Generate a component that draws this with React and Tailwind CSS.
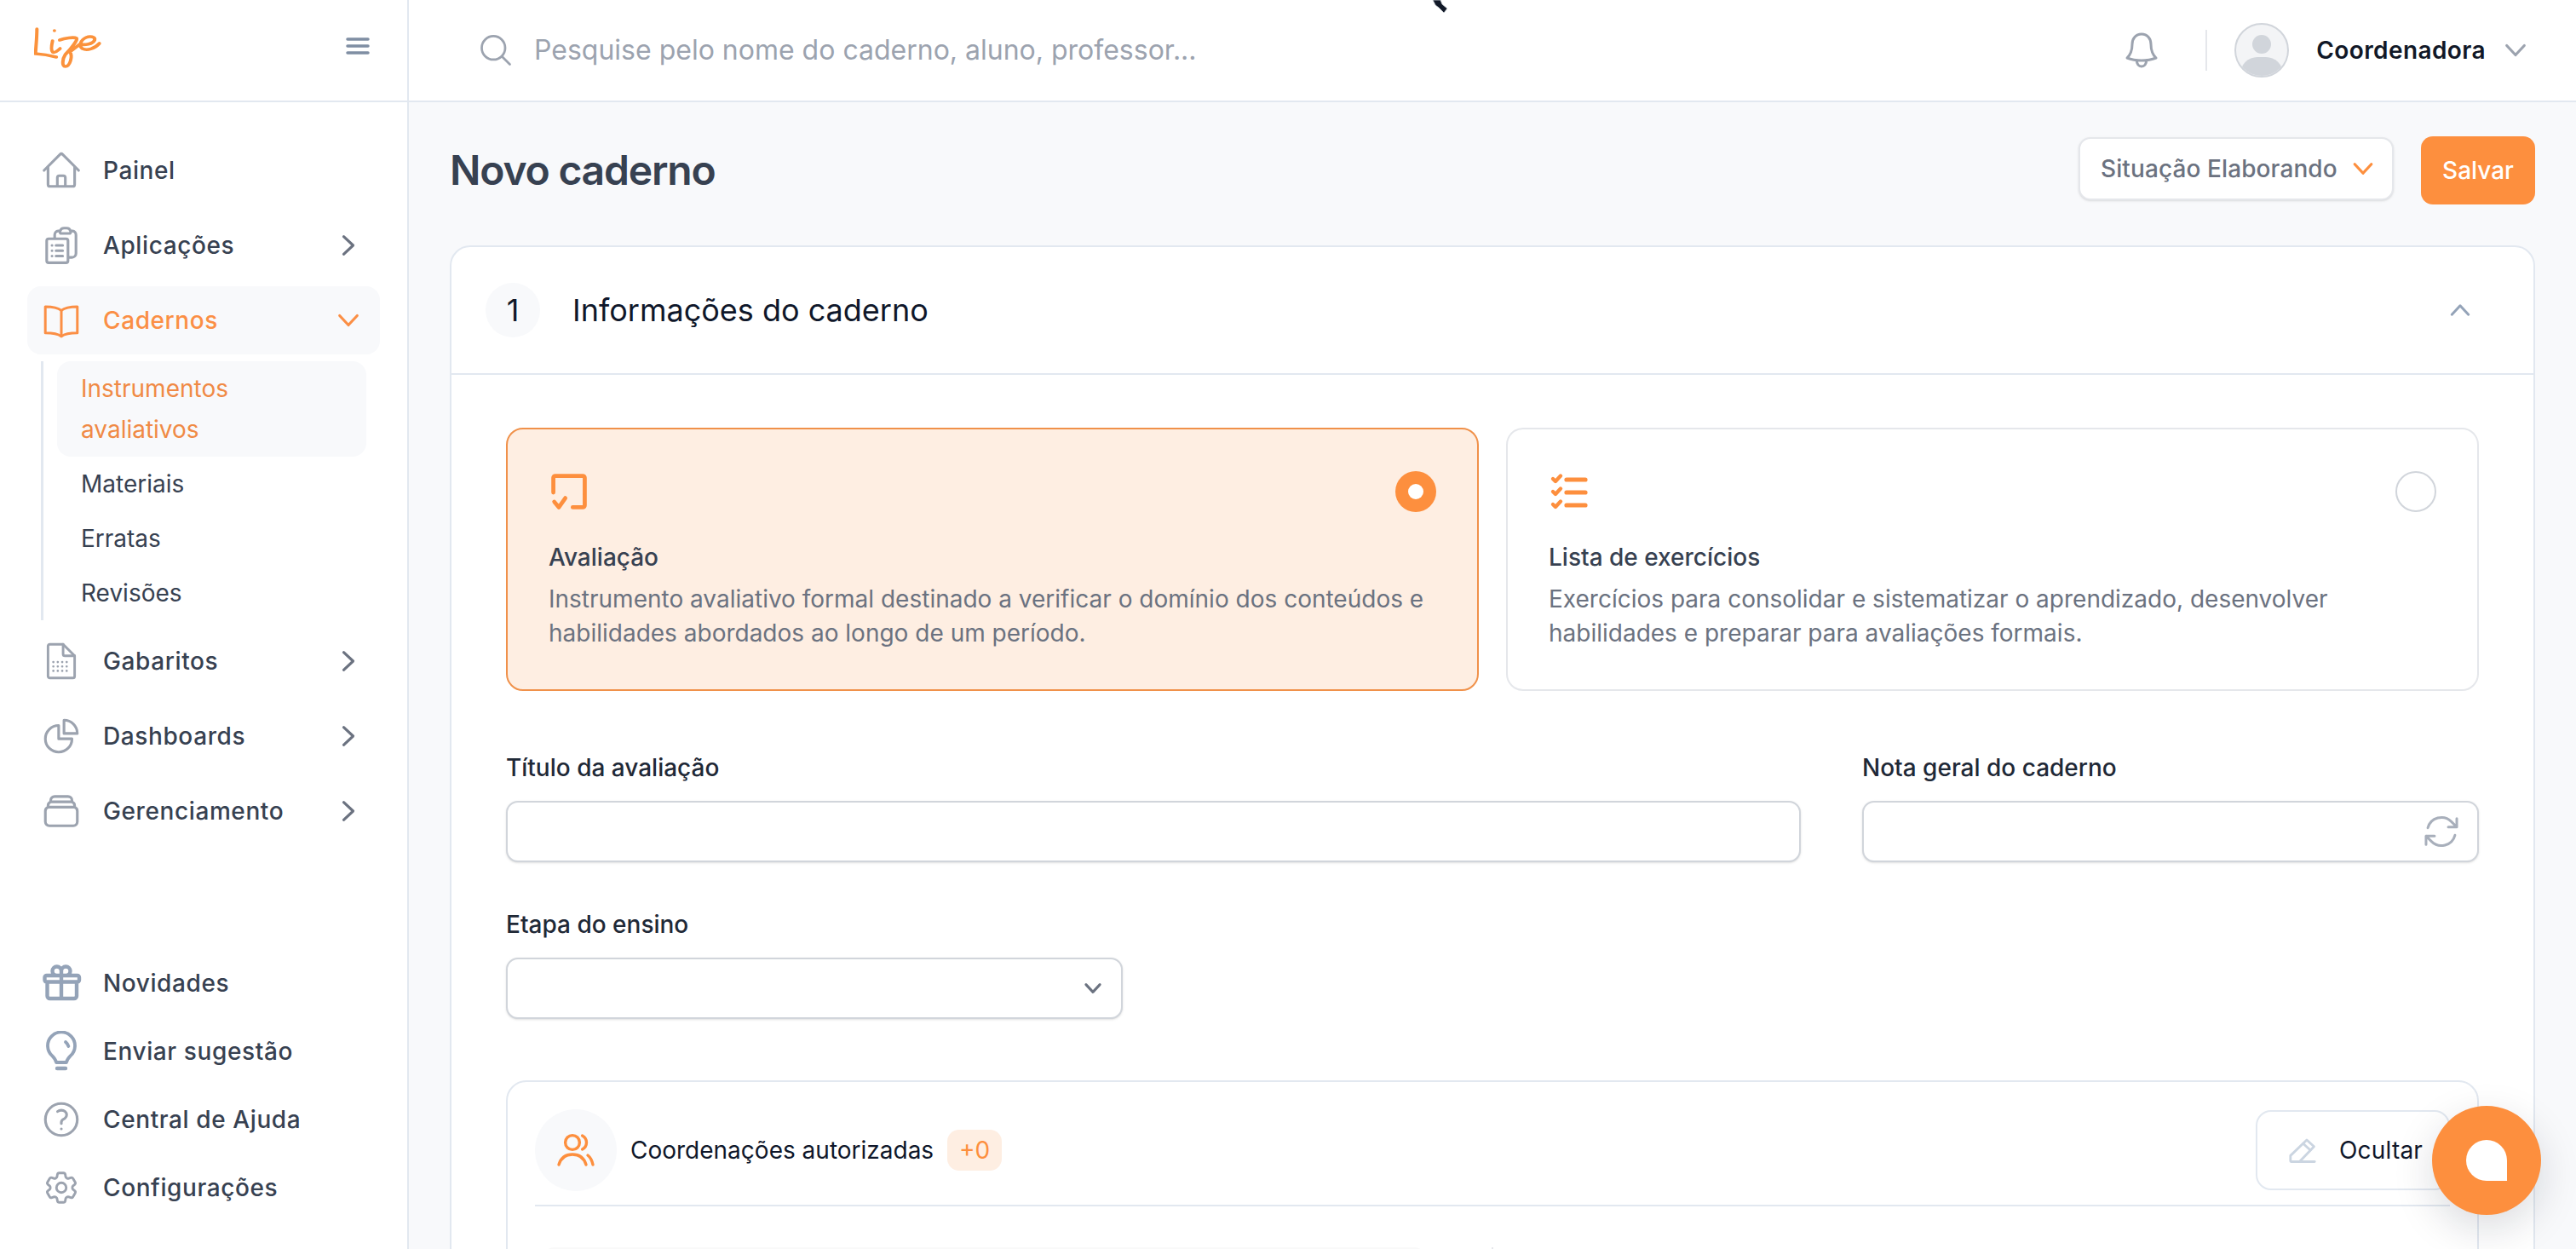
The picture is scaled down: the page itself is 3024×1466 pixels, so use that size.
import {
  HiOutlineHome,
  HiOutlineClipboardDocumentList,
  HiOutlineChartPie,
  HiOutlineRectangleStack,
  HiOutlineGift,
  HiOutlineQuestionMarkCircle,
  HiOutlineCog6Tooth,
  HiOutlineArrowPath,
  HiOutlineMagnifyingGlass,
} from "react-icons/hi2";

const ChevronDown = ({ className, strokeWidth = 2 }) => (
  <svg viewBox="0 0 24 24" fill="none" stroke="currentColor" strokeWidth={strokeWidth} strokeLinecap="round" strokeLinejoin="round" className={className}>
    <path d="M5.500 8.500l6.500 7 6.500-7" />
  </svg>
);

const ChevronRight = ({ className }) => (
  <svg viewBox="0 0 24 24" fill="none" stroke="currentColor" strokeWidth="2" strokeLinecap="round" strokeLinejoin="round" className={className}>
    <path d="M8.500 5.500l7 6.500-7 6.500" />
  </svg>
);

const BookIcon = ({ className }) => (
  <svg viewBox="0 0 24 24" fill="none" stroke="currentColor" strokeWidth="1.5" strokeLinejoin="round" strokeLinecap="round" className={className}>
    <path d="M12 6.200C10 4.600 7 4 2.600 4v15.400c4.400 0 7.400.5 9.400 2 2-1.500 5-2 9.400-2V4C17 4 14 4.600 12 6.200Z" />
    <path d="M12 6.200V21.400" />
  </svg>
);

const SheetIcon = ({ className }) => (
  <svg viewBox="0 0 24 24" fill="none" stroke="currentColor" strokeWidth="1.4" strokeLinejoin="round" strokeLinecap="round" className={className}>
    <path d="M5.500 2.500H13l6.500 6.500v11.500a1 1 0 0 1-1 1h-13a1 1 0 0 1-1-1v-17a1 1 0 0 1 1-1Z" />
    <path d="M13 2.500V8a1 1 0 0 0 1 1h5.500" />
    <path d="M7.500 12.500h.01M10 12.500h.01M12.500 12.500h.01M15 12.500h.01M7.500 15h.01M10 15h.01M12.500 15h.01M15 15h.01M7.500 17.500h.01M10 17.500h.01M12.500 17.500h.01M15 17.500h.01" strokeWidth="1.3" />
  </svg>
);

const BulbIcon = ({ className }) => (
  <svg viewBox="0 0 24 24" fill="none" stroke="currentColor" strokeWidth="1.9" strokeLinecap="round" strokeLinejoin="round" className={className}>
    <path d="M9 18.500c-.3-1.800-1.200-2.700-2.300-3.800A8 8 0 1 1 17.300 14.700c-1.100 1.100-2 2-2.300 3.800H9Z" />
    <path d="M9.500 22h5" strokeWidth="2.200" />
    <path d="M14.500 6.500c.8.700 1.300 1.500 1.700 2.500" />
  </svg>
);

const BellIcon = ({ className }) => (
  <svg viewBox="0 0 24 24" fill="none" stroke="currentColor" strokeWidth="1.5" strokeLinecap="round" strokeLinejoin="round" className={className}>
    <path d="M12 2.500c-3.400 0-5.500 2.600-5.500 6 0 4-.9 6-3 8 2.500 1 5.500 1.500 8.500 1.500s6-.5 8.500-1.500c-2.100-2-3-4-3-8 0-3.400-2.100-6-5.500-6Z" />
    <path d="M9.200 18c-.1 2.200 1.200 3.500 2.800 3.500s2.900-1.300 2.800-3.500" />
  </svg>
);

const Lize = () => (
  <svg viewBox="0 0 72 48" preserveAspectRatio="none" fill="none" stroke="#fb923c" strokeWidth="3.6" strokeLinecap="round" strokeLinejoin="round" className="h-[48px] w-[80px]">
    <path d="M3 2C3 12 2 22 1.500 31c7 .5 15 2 22 4" />
    <path d="M19.500 16c-1 5-2 11 0 13 2 1.500 5-1 8-4" />
    <path d="M21.500 4h.01" />
    <path d="M27 15c5-2 15-4 18-2 1 2-6 12-12 19-3 5-4 14 0 14 5 0 8-12 5-17 2-2 6-5 10-9 6 1 14 0 16-5 1-4-5-5-9-3-6 3-8 10-4 13 5 3 13 0 18-6" />
  </svg>
);

const NavItem = ({ icon: Icon, label, chevron, active, iconClass = "h-[50px] w-[50px] text-[#9ca3af]", strokeWidth }) => {
  const extra = strokeWidth ? { strokeWidth } : {};
  return (
    <a className={`flex h-[80px] items-center rounded-[16px] pl-[14px] pr-[18px] ${active ? "bg-[#f8f9fb] text-[#fb8f45]" : "text-[#374151]"}`}>
      <div className="flex h-[52px] w-[52px] shrink-0 items-center justify-center">
        <Icon className={iconClass} {...extra} />
      </div>
      <span className="ml-[23px] flex-1 text-[28px] font-medium tracking-[0.6px]">{label}</span>
      {chevron === "right" && <ChevronRight className="h-[38px] w-[38px] text-[#6b7280]" />}
      {chevron === "down" && <ChevronDown className="h-[38px] w-[38px]" />}
    </a>
  );
};

const Sidebar = () => (
  <aside className="flex h-full w-[480px] shrink-0 flex-col border-r-2 border-[#e2e8f0] bg-white">
    <div className="flex h-[120px] shrink-0 items-center justify-between border-b-2 border-[#e2e8f0] pb-[6px] pl-[40px] pr-[44px]">
      <Lize />
      <svg viewBox="0 0 28 20" fill="none" stroke="#7f8ea3" strokeWidth="3.5" strokeLinecap="round" className="mb-[4px] h-[20px] w-[28px]">
        <path d="M2 2h24M2 10h24M2 18h24" />
      </svg>
    </div>
    <nav className="flex flex-col gap-[8px] px-[32px] pt-[40px]">
      <NavItem icon={HiOutlineHome} label="Painel" />
      <NavItem icon={HiOutlineClipboardDocumentList} label="Aplicações" chevron="right" />
      <NavItem icon={BookIcon} iconClass="h-[48px] w-[48px]" label="Cadernos" chevron="down" active />
    </nav>
    <div className="mx-[48px] mt-[8px] border-l-[3px] border-[#e2e8f0] pl-[16px] text-[28px] text-[#374151]">
      <div className="rounded-[16px] bg-[#f8f9fb] py-[8px] pl-[28px] leading-[48px] text-[#f08a45]">
        Instrumentos
        <br />
        avaliativos
      </div>
      <div className="pl-[28px] leading-[64px]">Materiais</div>
      <div className="pl-[28px] leading-[64px]">Erratas</div>
      <div className="pl-[28px] leading-[64px]">Revisões</div>
    </div>
    <nav className="mt-[8px] flex flex-col gap-[8px] px-[32px]">
      <NavItem icon={SheetIcon} label="Gabaritos" chevron="right" />
      <NavItem icon={HiOutlineChartPie} label="Dashboards" chevron="right" />
      <NavItem icon={HiOutlineRectangleStack} label="Gerenciamento" chevron="right" />
    </nav>
    <nav className="mt-auto flex flex-col px-[32px] pb-[32px]">
      <NavItem icon={HiOutlineGift} label="Novidades" iconClass="h-[48px] w-[48px] text-[#94a3b8]" strokeWidth={2.2} />
      <NavItem icon={BulbIcon} label="Enviar sugestão" iconClass="h-[48px] w-[48px] text-[#94a3b8]" />
      <NavItem icon={HiOutlineQuestionMarkCircle} label="Central de Ajuda" />
      <NavItem icon={HiOutlineCog6Tooth} iconClass="h-[46px] w-[46px] text-[#9ca3af]" label="Configurações" />
    </nav>
  </aside>
);

const Topbar = () => (
  <header className="flex h-[120px] shrink-0 items-center border-b-2 border-[#e2e8f0] bg-white pl-[80px] pr-[52px]">
    <HiOutlineMagnifyingGlass className="h-[44px] w-[44px] text-[#9ca3af]" />
    <span className="ml-[23px] flex-1 text-[32px] text-[#9ca3af]">Pesquise pelo nome do caderno, aluno, professor...</span>
    <BellIcon className="h-[48px] w-[48px] text-[#9ca3af]" />
    <div className="ml-[51px] h-[48px] w-[2px] bg-[#e5e7eb]" />
    <div className="ml-[32px] h-[64px] w-[64px] overflow-hidden rounded-full border-[2px] border-[#d1d5db] bg-[#f3f4f6]">
      <div className="mx-auto mt-[12px] h-[22px] w-[22px] rounded-full bg-[#d1d5db]" />
      <div className="mx-auto mt-[4px] h-[40px] w-[50px] rounded-full bg-[#d1d5db]" />
    </div>
    <span className="ml-[32px] text-[28px] font-semibold tracking-[0.4px] text-[#111827]">Coordenadora</span>
    <ChevronDown className="ml-[16px] h-[38px] w-[38px] text-[#9ca3af]" />
  </header>
);

const OptionCard = ({ icon, title, lines, selected }) => (
  <div className={`h-[309px] rounded-[20px] border-[2px] px-[48px] pt-[48px] ${selected ? "border-[#f0914a] bg-[#feeee2]" : "border-[#e5e7eb] bg-white"}`}>
    <div className="flex h-[50px] items-center justify-between">
      {icon}
      {selected ? (
        <div className="flex h-[48px] w-[48px] items-center justify-center rounded-full bg-[#fd8f3e]">
          <div className="h-[18px] w-[18px] rounded-full bg-white" />
        </div>
      ) : (
        <div className="h-[48px] w-[48px] rounded-full border-[2px] border-[#d1d5db]" />
      )}
    </div>
    <div className="mt-[32px] text-[28px] font-medium leading-[40px] text-[#374151]">{title}</div>
    <p className="mt-[9px] text-[28px] leading-[40px] text-[#6b7280]">
      {lines[0]}
      <br />
      {lines[1]}
    </p>
  </div>
);

const AssessmentIcon = () => (
  <svg viewBox="0 0 24 24" fill="none" stroke="#fd8f3e" strokeWidth="2.2" strokeLinecap="round" strokeLinejoin="round" className="-ml-[2px] h-[52px] w-[52px]">
    <path d="M3.500 12.500V4.500a1 1 0 0 1 1-1h15a1 1 0 0 1 1 1v15a1 1 0 0 1-1 1H14" />
    <path d="M4 17.500l2.500 3 3.500-5" />
  </svg>
);

const ChecklistIcon = () => (
  <svg viewBox="0 0 24 24" fill="none" stroke="#fd8f3e" strokeWidth="2.2" strokeLinecap="round" strokeLinejoin="round" className="h-[48px] w-[48px]">
    <path d="M2.500 4.500l1.500 1.500L7 2.800M2.500 12l1.500 1.500 3-3.200M2.500 19.500L4 21l3-3.200" />
    <path d="M10.500 5h11M10.500 12.500h11M10.500 20h11" strokeWidth="2.6" />
  </svg>
);

const UsersIcon = () => (
  <svg viewBox="0 0 24 24" fill="none" stroke="#fd8f3e" strokeWidth="1.7" strokeLinecap="round" className="h-[48px] w-[48px]">
    <circle cx="10" cy="7.500" r="4.200" />
    <path d="M15.800 3.500a4.500 4.500 0 0 1 0 8" />
    <path d="M2 20.500c1.200-4 4.300-6 8-6s6.800 2 8 6" />
    <path d="M19 15c1.500 1.200 2.500 3 3 5.500" />
  </svg>
);

const PencilIcon = ({ className }) => (
  <svg viewBox="0 0 24 24" fill="none" stroke="currentColor" strokeWidth="2" strokeLinecap="round" strokeLinejoin="round" className={className}>
    <path d="M2 16.500 15.500 3.500l6 5.500L9.500 21.500H2.500a.5.5 0 0 1-.5-.5v-4.500Z" />
    <path d="M12.500 6.500l6 5.500" />
    <path d="M9.500 21.500H22" />
  </svg>
);

const Field = ({ label, className = "", children }) => (
  <div className={className}>
    <div className="text-[28px] font-medium leading-[40px] text-[#1f2937]">{label}</div>
    <div className="mt-[19px] flex h-[72px] items-center justify-end rounded-[14px] border-[2px] border-[#d1d5db] bg-white pr-[20px] shadow-sm">
      {children}
    </div>
  </div>
);

export default function App() {
  return (
    <div className="relative flex h-[1466px] w-full overflow-hidden bg-[#f8f9fb] font-[Inter,sans-serif]">
      <Sidebar />
      <main className="flex min-w-0 flex-1 flex-col">
        <Topbar />
        <div className="px-[48px]">
          <div className="flex h-[168px] items-center justify-between pb-[8px]">
            <h1 className="text-[48px] font-semibold tracking-[-1.2px] text-[#374151]">Novo caderno</h1>
            <div className="flex items-center gap-[32px]">
              <div className="mb-[4px] flex h-[74px] w-[370px] items-center justify-between rounded-[14px] border-[2px] border-[#e5e7eb] bg-white pl-[24px] pr-[16px] shadow-sm">
                <span className="text-[28px] font-medium tracking-[0.1px] text-[#6b7280]">Situação Elaborando</span>
                <ChevronDown className="h-[36px] w-[36px] text-[#fd8f3e]" strokeWidth={2.2} />
              </div>
              <button className="h-[80px] w-[134px] rounded-[14px] bg-[#fd8f3e] text-[28px] font-medium text-white">Salvar</button>
            </div>
          </div>
          <section className="rounded-[24px] border-[2px] border-[#e2e8f0] bg-white">
            <div className="flex h-[150px] items-center border-b-2 border-[#e2e8f0] pl-[40px] pr-[68px]">
              <div className="flex h-[64px] w-[64px] items-center justify-center rounded-full bg-[#f8f9fb] text-[36px] text-[#111827]">1</div>
              <span className="ml-[38px] flex-1 text-[36px] text-[#0f172a]">Informações do caderno</span>
              <ChevronDown className="h-[36px] w-[36px] rotate-180 text-[#94a3b8]" />
            </div>
            <div className="px-[64px] pt-[62px]">
              <div className="grid grid-cols-2 gap-[32px]">
                <OptionCard
                  selected
                  icon={<AssessmentIcon />}
                  title="Avaliação"
                  lines={["Instrumento avaliativo formal destinado a verificar o domínio dos conteúdos e", "habilidades abordados ao longo de um período."]}
                />
                <OptionCard
                  icon={<ChecklistIcon />}
                  title="Lista de exercícios"
                  lines={["Exercícios para consolidar e sistematizar o aprendizado, desenvolver", "habilidades e preparar para avaliações formais."]}
                />
              </div>
              <div className="mt-[70px] flex gap-[72px]">
                <Field label="Título da avaliação" className="flex-1" />
                <Field label="Nota geral do caderno" className="w-[724px]">
                  <HiOutlineArrowPath className="-mr-[2px] h-[48px] w-[48px] text-[#a8afbb]" />
                </Field>
              </div>
              <Field label="Etapa do ensino" className="mt-[53px] w-[724px]">
                <ChevronDown className="-mr-[2px] h-[30px] w-[30px] text-[#6b7280]" strokeWidth={2.4} />
              </Field>
              <div className="mt-[72px] rounded-[24px] border-[2px] border-[#e2e8f0] px-[32px] pt-[32px]">
                <div className="flex items-center justify-between border-b-2 border-[#e2e8f0] pb-[16px]">
                  <div className="flex items-center">
                    <div className="flex h-[96px] w-[96px] items-center justify-center rounded-full bg-[#f8f9fb]">
                      <UsersIcon />
                    </div>
                    <span className="ml-[16px] text-[28px] text-[#0f172a]">Coordenações autorizadas</span>
                    <span className="ml-[16px] flex h-[48px] w-[64px] items-center justify-center rounded-[14px] bg-[#feeee2] text-[28px] text-[#fd8f3e]">+0</span>
                  </div>
                  <div className="flex h-[94px] w-[228px] items-center rounded-[18px] border-[2px] border-[#e2e8f0] pl-[36px]">
                    <PencilIcon className="h-[34px] w-[34px] text-[#cbd5e1]" />
                    <span className="ml-[26px] text-[28px] tracking-[0.2px] text-[#0f172a]">Ocultar</span>
                  </div>
                </div>
                <div className="mt-[48px] flex items-start">
                  <div className="ml-[7px] h-[80px] w-[1041px] rounded-[16px] bg-[#f9f9f9]" />
                  <div className="ml-[75px] h-[80px] w-[2px] bg-[#e5e7eb]" />
                </div>
              </div>
            </div>
          </section>
        </div>
      </main>
      <div className="absolute left-[2855px] top-[1298px] flex h-[128px] w-[128px] items-center justify-center rounded-full bg-[#fd8f3e] shadow-[0_16px_48px_rgba(15,23,42,0.15)]">
        <div className="h-[48px] w-[48px] rounded-[24px] rounded-br-none bg-white" />
      </div>
      <svg viewBox="0 0 20 16" className="absolute left-[1681px] top-0 h-[16px] w-[20px]">
        <path d="M1 0h9l2 5 6 5-4 5-6-6-4-3z" fill="#111827" stroke="#d1d5db" strokeWidth="0.8" />
      </svg>
    </div>
  );
}
